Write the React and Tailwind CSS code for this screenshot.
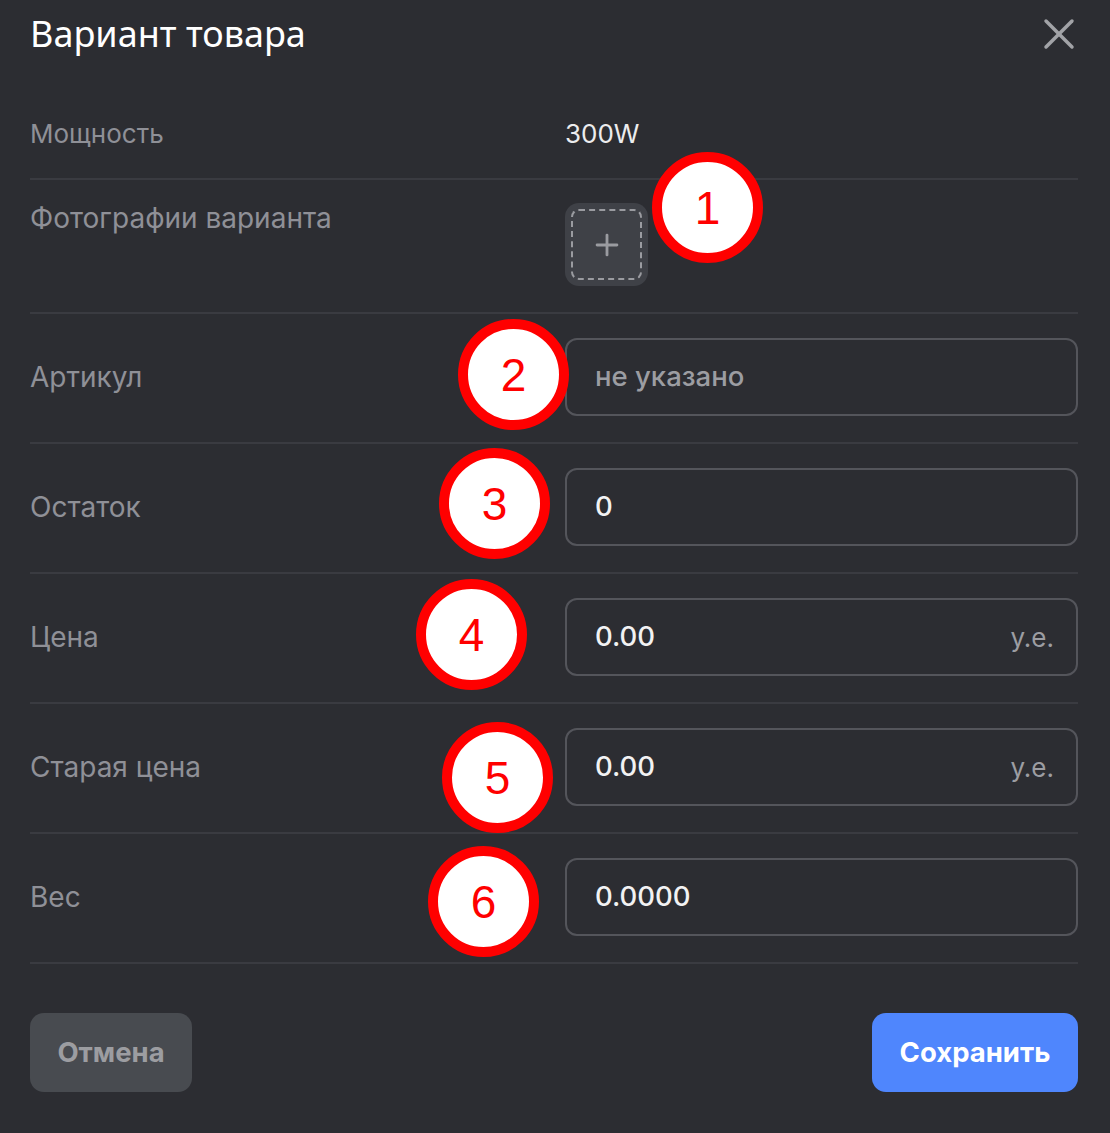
import { X, Plus } from "lucide-react";

const BADGES = [
  { n: 1, className: "left-[652px] top-[152px]" },
  { n: 2, className: "left-[458px] top-[319px]" },
  { n: 3, className: "left-[439px] top-[448px]" },
  { n: 4, className: "left-[416px] top-[579px]" },
  { n: 5, className: "left-[442px] top-[722px]" },
  { n: 6, className: "left-[428px] top-[846px]" },
];

const FIELDS = [
  { label: "Артикул", value: "не указано", placeholder: true },
  { label: "Остаток", value: "0" },
  { label: "Цена", value: "0.00", suffix: "у.е." },
  { label: "Старая цена", value: "0.00", suffix: "у.е." },
  { label: "Вес", value: "0.0000" },
];

function Badge({ n, className }) {
  return (
    <div
      className={`absolute ${className} flex h-[111px] w-[111px] items-center justify-center rounded-full border-[10px] border-[#ff0000] bg-white text-[46px] leading-none text-[#ff0000]`}
      style={{ fontFamily: '"Liberation Sans", Arial, sans-serif' }}
    >
      {n}
    </div>
  );
}

function FieldRow({ label, value, placeholder, suffix }) {
  return (
    <div className="flex items-center border-b-2 border-[#3a3b41] pb-[26px] pt-[24px]">
      <div className="w-[535px] text-[28px] leading-[30px] text-[#8f9097]">{label}</div>
      <div className="flex h-[78px] flex-1 items-center justify-between rounded-[12px] border-2 border-[#54555b] pl-[28px] pr-[22px] text-[27.5px] font-medium">
        <span className={placeholder ? "text-[#9c9da2]" : "text-[#f2f2f3]"}>{value}</span>
        {suffix && <span className="text-[26px] font-normal text-[#9c9da2]">{suffix}</span>}
      </div>
    </div>
  );
}

export default function App() {
  return (
    <div
      className="relative min-h-[1133px] bg-[#2c2d32] pl-[30px] pr-[32px]"
      style={{ fontFamily: 'Inter, "Liberation Sans", sans-serif' }}
    >
      <div className="flex h-[88px] items-start justify-between">
        <div className="flex h-[68px] items-center">
          <h1
            className="text-[36px] leading-none text-white"
            style={{ fontFamily: '"Noto Sans", sans-serif' }}
          >
            Вариант товара
          </h1>
        </div>
        <div className="flex h-[68px] items-center">
          <X className="-mr-[7px] h-[52px] w-[52px] text-[#a2a3a7]" strokeWidth={1.6} />
        </div>
      </div>

      <div className="flex h-[92px] items-center border-b-2 border-[#3a3b41]">
        <div className="w-[535px] text-[26px] text-[#8f9097]">Мощность</div>
        <div className="text-[26px] text-[#ececee]">300W</div>
      </div>

      <div className="flex h-[134px] items-start border-b-2 border-[#3a3b41] pt-[23px]">
        <div className="w-[535px] text-[28px] leading-[30px] text-[#8f9097]">
          Фотографии варианта
        </div>
        <div className="flex h-[83px] w-[83px] items-center justify-center rounded-[14px] bg-[#3f4147] p-[6px]">
          <div className="flex h-full w-full items-center justify-center rounded-[8px] border-2 border-dashed border-[#9a9ba0]">
            <Plus className="h-[34px] w-[34px] text-[#9a9ba0]" strokeWidth={2} />
          </div>
        </div>
      </div>

      {FIELDS.map((f) => (
        <FieldRow key={f.label} {...f} />
      ))}

      <div className="mt-[49px] flex justify-between">
        <button
          type="button"
          className="h-[79px] w-[162px] rounded-[14px] bg-[#484b50] text-[27.5px] font-bold text-[#9c9da1]"
        >
          Отмена
        </button>
        <button
          type="button"
          className="h-[79px] w-[206px] rounded-[14px] bg-[#4f86fd] text-[27.5px] font-bold text-white"
        >
          Сохранить
        </button>
      </div>

      {BADGES.map((b) => (
        <Badge key={b.n} {...b} />
      ))}
    </div>
  );
}
